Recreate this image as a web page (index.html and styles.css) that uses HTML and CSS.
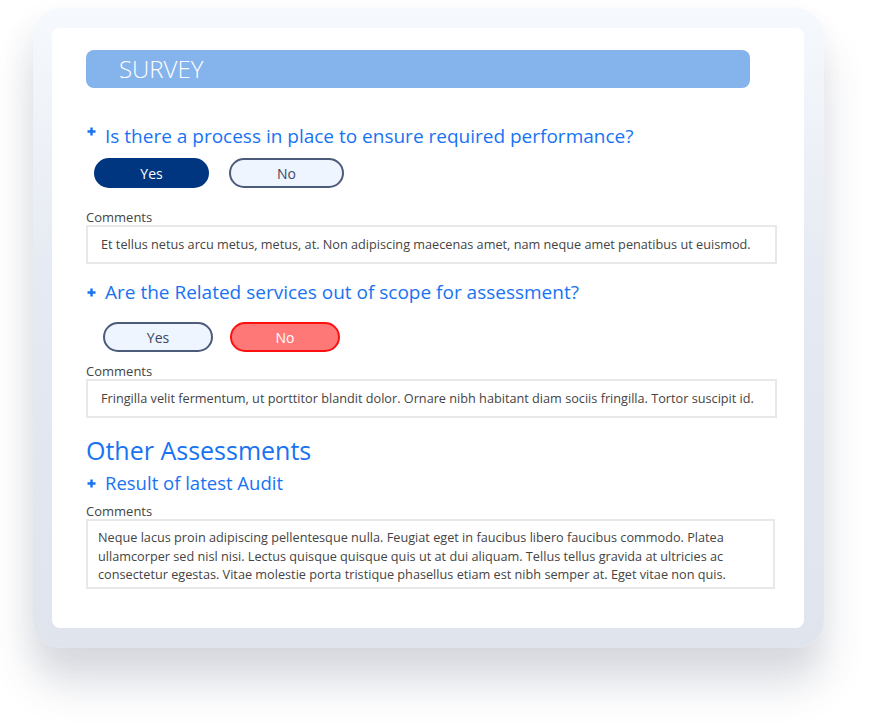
FILE: index.html
```html
<!DOCTYPE html>
<html>
	<head>
		<meta charset="utf-8"/>
		<title>Survey</title>
		<link rel="stylesheet" href="styles.css">
	</head>
	<body>
		<div class="frame">
			<main class="card">
				<div class="bar">SURVEY</div>

				<h2 class="question first"><svg class="plus top" viewBox="0 0 9 9"><path d="M4.5 0.5v8M0.5 4.5h8"/></svg>Is there a process in place to ensure required performance?</h2>
				<div class="answers one">
					<button type="button" class="btn yes-on">Yes</button>
					<button type="button" class="btn off">No</button>
				</div>
				<label class="label l1">Comments</label>
				<div class="comment">Et tellus netus arcu metus, metus, at. Non adipiscing maecenas amet, nam neque amet penatibus ut euismod.</div>

				<h2 class="question second"><svg class="plus" viewBox="0 0 9 9"><path d="M4.5 0.5v8M0.5 4.5h8"/></svg>Are the Related services out of scope for assessment?</h2>
				<div class="answers two">
					<button type="button" class="btn off">Yes</button>
					<button type="button" class="btn no-on">No</button>
				</div>
				<label class="label l2">Comments</label>
				<div class="comment">Fringilla velit fermentum, ut porttitor blandit dolor. Ornare nibh habitant diam sociis fringilla. Tortor suscipit id.</div>

				<h1 class="section">Other Assessments</h1>
				<h2 class="question third"><svg class="plus" viewBox="0 0 9 9"><path d="M4.5 0.5v8M0.5 4.5h8"/></svg>Result of latest Audit</h2>
				<label class="label l3">Comments</label>
				<div class="comment long">Neque lacus proin adipiscing pellentesque nulla. Feugiat eget in faucibus libero faucibus commodo. Platea ullamcorper sed nisl nisi. Lectus quisque quisque quis ut at dui aliquam. Tellus tellus gravida at ultricies ac consectetur egestas. Vitae molestie porta tristique phasellus etiam est nibh semper at. Eget vitae non quis.</div>
			</main>
		</div>
	</body>
</html>
```

FILE: styles.css
```css
body {
    margin: 0;
    padding: 8px 0 76px;
    background: #fff;
    font-family: 'Open Sans', 'DejaVu Sans', sans-serif;
    color: #444;
}
.frame {
    margin-left: 33px;
    width: 791px;
    height: 640px;
    box-sizing: border-box;
    padding: 20px 20px 20px 19px;
    border-radius: 28px;
    background: linear-gradient(#f6f9fd, #e6eaf2 40%, #dfe4ed);
    box-shadow: 0 36px 40px rgba(60, 70, 100, 0.18), -6px 10px 30px rgba(60, 70, 100, 0.05);
}
.card {
    display: flex;
    flex-direction: column;
    align-items: flex-start;
    height: 600px;
    box-sizing: border-box;
    padding: 22px 0 0 34px;
    background: #fff;
    border-radius: 8px;
}
.bar {
    width: 664px;
    height: 38px;
    box-sizing: border-box;
    padding-left: 33px;
    line-height: 38px;
    background: #85b3ec;
    border-radius: 8px;
    color: #fff;
    font-size: 24px;
    font-weight: 300;
}
.question {
    display: flex;
    align-items: center;
    margin: 0;
    height: 24px;
    line-height: 24px;
    color: #1873f2;
    font-size: 19px;
    font-weight: 400;
}
.plus {
    width: 9px;
    height: 9px;
    margin: 0 9px 0 1px;
    fill: none;
    stroke: #1873f2;
    stroke-width: 2.4;
}
.plus.top {
    align-self: flex-start;
    margin-top: 3px;
}
.question.first { margin-top: 36px; }
.question.second { margin-top: 16px; }
.question.third { margin-top: 6px; font-size: 18.5px; }
.answers {
    display: flex;
}
.answers.one {
    margin: 10px 0 0 8px;
    gap: 20px;
}
.answers.two {
    margin: 18px 0 0 17px;
    gap: 17px;
}
.btn {
    height: 30px;
    width: 115px;
    border-radius: 15px;
    font-family: inherit;
    font-size: 14px;
    padding: 0;
}
.yes-on {
    background: #003580;
    border: 0;
    color: #fff;
}
.off {
    background: #eef5fe;
    border: 2px solid #4d5b7a;
    color: #3d4762;
}
.answers.two .btn { width: 110px; }
.no-on {
    background: #ff7878;
    border: 2px solid #ff1010;
    color: #fff;
}
.label {
    font-size: 13px;
    line-height: 15px;
    color: #444;
}
.l1 { margin-top: 22px; }
.l2 { margin-top: 12px; }
.l3 { margin-top: 9px; }
.comment {
    width: 691px;
    height: 39px;
    box-sizing: border-box;
    padding-left: 13px;
    border: 2px solid #e8e8e8;
    font-size: 12.7px;
    line-height: 35px;
    color: #444;
}
.comment.long {
    width: 689px;
    height: 70px;
    padding: 7px 10px 0;
    line-height: 18.5px;
}
.section {
    margin: 17px 0 0;
    height: 30px;
    line-height: 30px;
    color: #1873f2;
    font-size: 25px;
    font-weight: 400;
}
```
